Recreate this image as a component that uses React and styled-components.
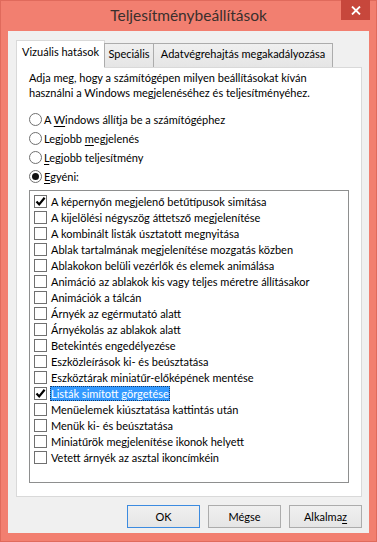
import React from 'react';
import styled, { createGlobalStyle } from 'styled-components';

const Global = createGlobalStyle`
  html, body { margin: 0; padding: 0; }
  body {
    width: 377px; height: 542px; overflow: hidden;
    font-family: Lato, "Noto Sans", sans-serif;
    font-size: 11px; color: #000;
  }
`;

const Window = styled.div`
  width: 377px; height: 542px; box-sizing: border-box;
  background: #f27f70;
  border: 1px solid #e06a5c;
  display: flex; flex-direction: column;
`;

const TitleBar = styled.div`
  height: 30px; flex: none;
  display: grid; grid-template-columns: 1fr auto 1fr;
  align-items: center;
`;

const Title = styled.div`
  grid-column: 2;
  font-size: 15.5px; color: #3a2f2d;
  padding-bottom: 2px;
`;

const CloseButton = styled.div`
  grid-column: 3; justify-self: end; align-self: start;
  margin-right: 6px; margin-top: -1px;
  width: 29px; height: 20px;
  background: #c7473c;
  display: flex; align-items: center; justify-content: center;
`;

const Client = styled.div`
  flex: 1; margin: 0 7px 8px;
  background: #f0f0f0;
  padding: 9px 7px 5px 8px;
  display: flex; flex-direction: column;
`;

const TabStrip = styled.div`
  height: 28px; margin-bottom: -1px;
  display: flex; align-items: flex-end;
  position: relative; z-index: 1;
`;

const Tab = styled.div`
  box-sizing: border-box; overflow: hidden;
  width: ${p => p.$w}px;
  height: ${p => (p.$active ? 28 : 24)}px;
  margin-bottom: ${p => (p.$active ? 0 : 1)}px;
  margin-left: ${p => (p.$first ? 0 : p.$active ? 0 : -1)}px;
  padding-top: ${p => (p.$active ? 1 : 0)}px;
  border: 1px solid ${p => (p.$active ? '#d9d9d9' : '#acacac')};
  border-bottom: none;
  background: ${p => (p.$active ? '#fff' : 'linear-gradient(#f0f0f0, #e5e5e5)')};
  text-align: center; line-height: 20px; white-space: nowrap;
`;

const Panel = styled.div`
  height: 430px; box-sizing: border-box; flex: none;
  background: #fff;
  border: 1px solid #d9d9d9;
  padding: 2px 12px 13px;
  display: flex; flex-direction: column;
`;

const Description = styled.div`
  line-height: 15px; white-space: nowrap;
`;

const RadioGroup = styled.div`
  margin-top: 10px;
  display: flex; flex-direction: column;
`;

const RadioRow = styled.div`
  height: 19px; display: flex; align-items: center; gap: 2px;
  white-space: nowrap;
`;

const RadioCircle = styled.span`
  width: 13px; height: 13px; box-sizing: border-box;
  border-radius: 50%; border: 1px solid #707070; background: #fff;
  display: flex; align-items: center; justify-content: center;
  &::after {
    content: '';
    display: ${p => (p.$checked ? 'block' : 'none')};
    width: 7px; height: 7px; border-radius: 50%; background: #111;
  }
`;

const U = styled.span`
  text-decoration: underline;
  text-underline-offset: 2px;
`;

const ListBox = styled.div`
  margin-top: 4px; flex: 1;
  border: 1px solid #8e8f8f;
  padding-top: 2px;
  display: flex; flex-direction: column;
`;

const Item = styled.div`
  height: 16px; padding-left: 4px;
  display: flex; align-items: center; gap: 4px;
  white-space: nowrap;
`;

const Box = styled.span`
  width: 13px; height: 13px; box-sizing: border-box; flex: none;
  border: 1px solid #707070; background: #fff;
  display: flex; align-items: center; justify-content: center;
`;

const ItemText = styled.span`
  line-height: 15px;
  padding: 0 1px;
  margin-left: -1px;
  background: ${p => (p.$selected ? '#3399ff' : 'transparent')};
  color: ${p => (p.$selected ? '#fff' : '#000')};
  outline: ${p => (p.$selected ? '1px dotted #1a3c66' : 'none')};
  outline-offset: -1px;
`;

const ButtonRow = styled.div`
  margin-top: 8px;
  display: flex; justify-content: flex-end; gap: 8px;
`;

const Button = styled.div`
  width: 73px; height: 23px; box-sizing: border-box;
  border: 1px solid ${p => (p.$default ? '#3c8be0' : '#acacac')};
  background: linear-gradient(#f0f0f0, #e5e5e5);
  display: flex; align-items: center; justify-content: center;
`;

const Check = () => (
  <svg width="11" height="11" viewBox="0 0 11 11">
    <path d="M1.5 5.5 L4.2 8.4 L9.6 1.8" fill="none" stroke="#000" strokeWidth="2.2" />
  </svg>
);

const items = [
  ['A képernyőn megjelenő betűtípusok simítása', true],
  ['A kijelölési négyszög áttetsző megjelenítése'],
  ['A kombinált listák úsztatott megnyitása'],
  ['Ablak tartalmának megjelenítése mozgatás közben'],
  ['Ablakokon belüli vezérlők és elemek animálása'],
  ['Animáció az ablakok kis vagy teljes méretre állításakor'],
  ['Animációk a tálcán'],
  ['Árnyék az egérmutató alatt'],
  ['Árnyékolás az ablakok alatt'],
  ['Betekintés engedélyezése'],
  ['Eszközleírások ki- és beúsztatása'],
  ['Eszköztárak miniatűr-előképének mentése'],
  ['Listák simított görgetése', true, true],
  ['Menüelemek kiúsztatása kattintás után'],
  ['Menük ki- és beúsztatása'],
  ['Miniatűrök megjelenítése ikonok helyett'],
  ['Vetett árnyék az asztal ikoncímkéin'],
];

export default function App() {
  return (
    <>
      <Global />
      <Window>
        <TitleBar>
          <Title>Teljesítménybeállítások</Title>
          <CloseButton>
            <svg width="10" height="9" viewBox="0 0 10 9">
              <path d="M1 0.5 L9 8.5 M9 0.5 L1 8.5" stroke="#fff" strokeWidth="1.8" />
            </svg>
          </CloseButton>
        </TitleBar>
        <Client>
          <TabStrip>
            <Tab $active $first $w={89}>Vizuális hatások</Tab>
            <Tab $w={50}>Speciális</Tab>
            <Tab $w={180}>Adatvégrehajtás megakadályozása</Tab>
          </TabStrip>
          <Panel>
            <Description>
              Adja meg, hogy a számítógépen milyen beállításokat kíván<br />
              használni a Windows megjelenéséhez és teljesítményéhez.
            </Description>
            <RadioGroup>
              <RadioRow><RadioCircle /><span>A <U>W</U>indows állítja be a számítógéphez</span></RadioRow>
              <RadioRow><RadioCircle /><span>Legjobb <U>m</U>egjelenés</span></RadioRow>
              <RadioRow><RadioCircle /><span><U>L</U>egjobb teljesítmény</span></RadioRow>
              <RadioRow><RadioCircle $checked /><span><U>E</U>gyéni:</span></RadioRow>
            </RadioGroup>
            <ListBox>
              {items.map(([label, checked, selected]) => (
                <Item key={label}>
                  <Box>{checked && <Check />}</Box>
                  <ItemText $selected={selected}>{label}</ItemText>
                </Item>
              ))}
            </ListBox>
          </Panel>
          <ButtonRow>
            <Button $default>OK</Button>
            <Button>Mégse</Button>
            <Button>Alkalma<U>z</U></Button>
          </ButtonRow>
        </Client>
      </Window>
    </>
  );
}
